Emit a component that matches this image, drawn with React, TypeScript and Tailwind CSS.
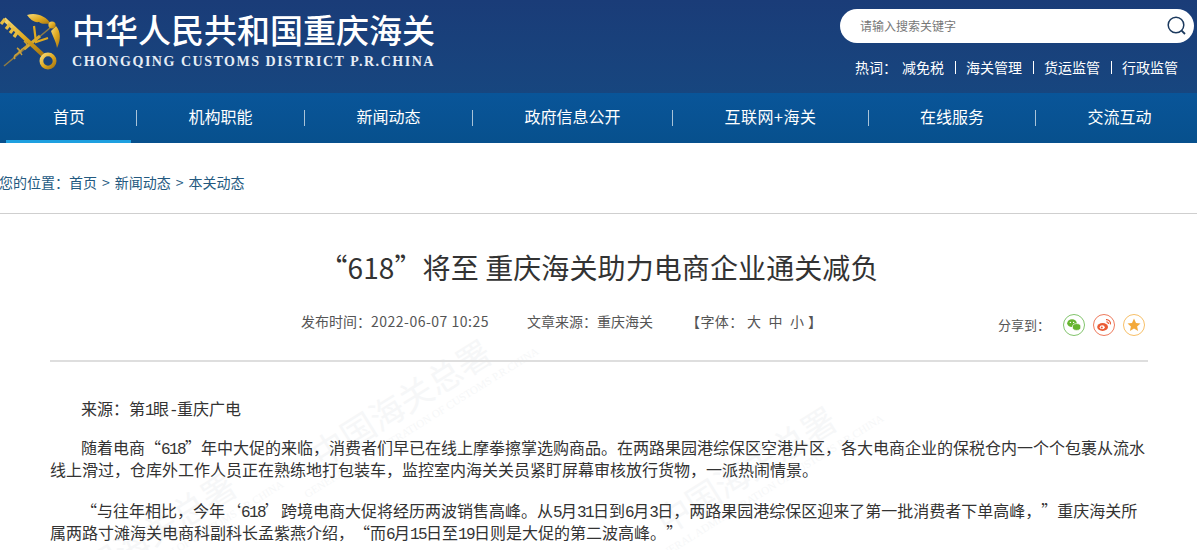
const cjk = "font-['Noto_Sans_CJK_SC','Noto_Sans',sans-serif]";

function Logo() {
  return (
    <svg width="62" height="68" viewBox="0 0 62 68" className="shrink-0" fill="none">
      <defs>
        <linearGradient id="g" x1="0" y1="0" x2="1" y2="1">
          <stop offset="0" stopColor="#f6da78" />
          <stop offset="0.5" stopColor="#e0ab22" />
          <stop offset="1" stopColor="#a87710" />
        </linearGradient>
      </defs>
      <path d="M50 24 L4 62" stroke="#8d7b45" strokeWidth="1.6" />
      <path d="M40 32 L24 45" stroke="#d7ab32" strokeWidth="3" />
      <path d="M24 37 q6 4 0 7 q-6 3 -2 7 M17 44 q5 3 0 6 q-4 2 -2 5" stroke="#c9a03a" strokeWidth="1.6" />
      <path d="M27 11 C36 8 46 12 51 20 C45 19 43 21 39 18 C34 19 30 15 27 11Z" fill="url(#g)" />
      <path d="M56 22 C61 28 61 36 57 44 C56 37 53 33 51 27Z" fill="url(#g)" />
      <circle cx="52" cy="21" r="3.6" fill="url(#g)" />
      <path d="M34 22 L36 38 L48 34" stroke="#e0ab22" strokeWidth="2.2" />
      <path d="M4 15 L43 51" stroke="url(#g)" strokeWidth="4.4" />
      <path d="M5 15 L1 20 M10 20 L6 25 M14 24 L10 29 M18 27 L14 33" stroke="#e8bd40" strokeWidth="3.2" />
      <circle cx="48" cy="57" r="6.6" stroke="url(#g)" strokeWidth="3.8" />
    </svg>
  );
}

function Separator() {
  return <span className="mb-[1px] h-[16px] w-px shrink-0 bg-[#a9c3d8]" />;
}

function Nav() {
  const items = [
    { t: "机构职能", c: "px-[46.5px]" },
    { t: "新闻动态", c: "px-[46.5px]" },
    { t: "政府信息公开", c: "px-[46.5px]" },
    { t: "互联网+海关", c: "px-[46.5px] tracking-[0.5px]" },
    { t: "在线服务", c: "px-[46px]" },
    { t: "交流互动", c: "px-[46.5px]" },
  ];
  return (
    <nav className="flex h-[50px] items-stretch gap-[5px] bg-gradient-to-b from-[#095599] to-[#07508d] pl-[6px] text-[16px] text-white">
      <a className="flex items-center border-b-[3px] border-[#1ea0e0] pr-[46px] pb-[1px] pl-[47px] whitespace-nowrap">首页</a>
      {items.map((item) => (
        <div key={item.t} className="flex items-center gap-[5px]">
          <Separator />
          <a className={`flex h-full items-center whitespace-nowrap pb-[4px] ${item.c}`}>{item.t}</a>
        </div>
      ))}
    </nav>
  );
}

function Share() {
  return (
    <div className="flex items-center pt-[3px]">
      <span className="mr-[13px] text-[13px] text-[#555]">分享到：</span>
      <div className="flex gap-[8px]">
        <svg width="22" height="22" viewBox="0 0 22 22" fill="none">
          <circle cx="11" cy="11" r="10.5" stroke="#82c46c" />
          <ellipse cx="9" cy="9.2" rx="4.8" ry="3.9" fill="#66b52f" />
          <ellipse cx="13.6" cy="13" rx="4.2" ry="3.4" fill="#66b52f" stroke="#fff" strokeWidth="0.7" />
          <circle cx="7.4" cy="8.4" r="0.7" fill="#fff" />
          <circle cx="10.6" cy="8.4" r="0.7" fill="#fff" />
        </svg>
        <svg width="22" height="22" viewBox="0 0 22 22" fill="none">
          <circle cx="11" cy="11" r="10.5" stroke="#ee7a5c" />
          <ellipse cx="9.6" cy="13" rx="5.4" ry="3.9" fill="#ea5b35" />
          <ellipse cx="9.2" cy="13.2" rx="2.5" ry="2" fill="#fff" />
          <circle cx="8.8" cy="13.4" r="1" fill="#ea5b35" />
          <path d="M13 5.6 A4 4 0 0 1 17.4 10.4 M13.4 7.8 A2 2 0 0 1 15.4 10" stroke="#ea5b35" strokeWidth="1.2" />
        </svg>
        <svg width="22" height="22" viewBox="0 0 22 22" fill="none">
          <circle cx="11" cy="11" r="10.5" stroke="#f7bf67" />
          <path d="M11 4.6 L13 8.9 L17.5 9.4 L14.1 12.4 L15.1 17 L11 14.6 L6.9 17 L7.9 12.4 L4.5 9.4 L9 8.9Z" fill="#f3a93a" />
        </svg>
      </div>
    </div>
  );
}

function Watermark({ className }: { className: string }) {
  return (
    <div className={`pointer-events-none absolute w-[260px] -rotate-[32deg] text-center text-[#f6f7f8] ${className}`}>
      <div className="text-[34px] leading-[40px] whitespace-nowrap">中国海关总署</div>
      <div className="font-['Liberation_Serif',serif] text-[11px] whitespace-nowrap">GENERAL ADMINISTRATION OF CUSTOMS P.R.CHINA</div>
    </div>
  );
}

function Seg({ text }: { text: string }) {
  const parts = text.split(/([0-9-]+|[“‘]|[”’])/).filter(Boolean);
  return (
    <>
      {parts.map((p, i) => {
        if (/^[0-9-]+$/.test(p)) {
          return (
            <span key={i} className="font-['Liberation_Mono',monospace] leading-[0px] tracking-[-1.6px]">
              {p}
            </span>
          );
        }
        if (p === "“" || p === "‘") {
          return (
            <span key={i} className="inline-block w-[16px] indent-0 leading-[0px] text-right">
              {p}
            </span>
          );
        }
        if (p === "”" || p === "’") {
          return (
            <span key={i} className="inline-block w-[16px] indent-0 leading-[0px] text-left">
              {p}
            </span>
          );
        }
        return <span key={i}>{p}</span>;
      })}
    </>
  );
}

export default function App() {
  return (
    <div className={`relative h-[550px] w-[1197px] overflow-hidden bg-white ${cjk}`}>
      <header className="flex h-[93px] justify-between bg-gradient-to-b from-[#1a3c78] to-[#17467f]">
        <div className="flex items-start pt-[4px]">
          <Logo />
          <div className="ml-[10px] pt-[3px] text-white">
            <div className="whitespace-nowrap text-[33px] leading-[44px] font-medium">中华人民共和国重庆海关</div>
            <div className="mt-[2px] whitespace-nowrap font-['Liberation_Serif',serif] text-[14px] leading-[18px] font-bold tracking-[1.52px] text-[#e6edf5]">
              CHONGQING CUSTOMS DISTRICT P.R.CHINA
            </div>
          </div>
        </div>
        <div className="flex w-[357px] flex-col pt-[9px]">
          <div className="flex h-[34px] w-[354px] items-center justify-between rounded-full bg-white pr-[6px] pl-[20px]">
            <span className="text-[12px] text-[#777]">请输入搜索关键字</span>
            <svg width="22" height="22" viewBox="0 0 22 22" fill="none" stroke="#1c3a5e" strokeWidth="1.5">
              <circle cx="10" cy="10" r="7.8" />
              <path d="M15.6 15.6 L19 19" strokeWidth="1.8" />
            </svg>
          </div>
          <div className="mt-[14px] flex h-[20px] items-center pl-[15px] text-[14px] whitespace-nowrap text-white">
            <span className="w-[47px]">热词：</span>
            <a>减免税</a>
            <span className="mx-[10.5px] h-[13px] w-px bg-white" />
            <a>海关管理</a>
            <span className="mx-[10.5px] h-[13px] w-px bg-white" />
            <a>货运监管</a>
            <span className="mx-[10.5px] h-[13px] w-px bg-white" />
            <a>行政监管</a>
          </div>
        </div>
      </header>
      <Nav />
      <div className="-ml-[1px] flex h-[71px] items-center border-b border-[#cfcfcf] pt-[9px] text-[14px] whitespace-nowrap text-[#23597f]">
        <span>您的位置：</span>
        <a>首页</a>
        <span className="mx-[5px]">&gt;</span>
        <a>新闻动态</a>
        <span className="mx-[5px]">&gt;</span>
        <a>本关动态</a>
      </div>
      <main className="relative pr-[49px] pl-[50px]">
        <Watermark className="top-[167px] left-[275px]" />
        <Watermark className="top-[234px] left-[620px]" />
        <Watermark className="top-[300px] left-[20px]" />
        <h1 className="pt-[32px] text-center text-[28px] leading-[42px] tracking-[0.1px] whitespace-nowrap text-[#333]">“618”将至 重庆海关助力电商企业通关减负</h1>
        <div className="relative mt-[23px] flex h-[51px] items-start border-b-2 border-[#dedede] text-[14px] leading-[20px] text-[#555]">
          <div className="ml-[251px] flex whitespace-nowrap">
            <span>
              发布时间：<span className="tracking-[0.5px]">2022-06-07 10:25</span>
            </span>
            <span className="ml-[38px]">文章来源：重庆海关</span>
            <span className="ml-[33px] tracking-[0.4px]">【字体：&nbsp;大&nbsp;&nbsp;中&nbsp;&nbsp;小 】</span>
          </div>
          <div className="ml-auto pr-[3px]">
            <Share />
          </div>
        </div>
        <article className="relative z-10 pt-[35px] text-[16px] leading-[22px] whitespace-nowrap text-[#333]">
          <p className="indent-[31px]">
            <Seg text="来源：第1眼-重庆广电" />
          </p>
          <p className="mt-[17px] indent-[31px]">
            <Seg text="随着电商“618”年中大促的来临，消费者们早已在线上摩拳擦掌选购商品。在两路果园港综保区空港片区，各大电商企业的保税仓内一个个包裹从流水" />
            <br />
            <Seg text="线上滑过，仓库外工作人员正在熟练地打包装车，监控室内海关关员紧盯屏幕审核放行货物，一派热闹情景。" />
          </p>
          <p className="mt-[19px] indent-[31px]">
            <Seg text="“与往年相比，今年‘618’跨境电商大促将经历两波销售高峰。从5月31日到6月3日，两路果园港综保区迎来了第一批消费者下单高峰，”重庆海关所" />
            <br />
            <Seg text="属两路寸滩海关电商科副科长孟紫燕介绍，“而6月15日至19日则是大促的第二波高峰。”" />
          </p>
        </article>
      </main>
    </div>
  );
}
